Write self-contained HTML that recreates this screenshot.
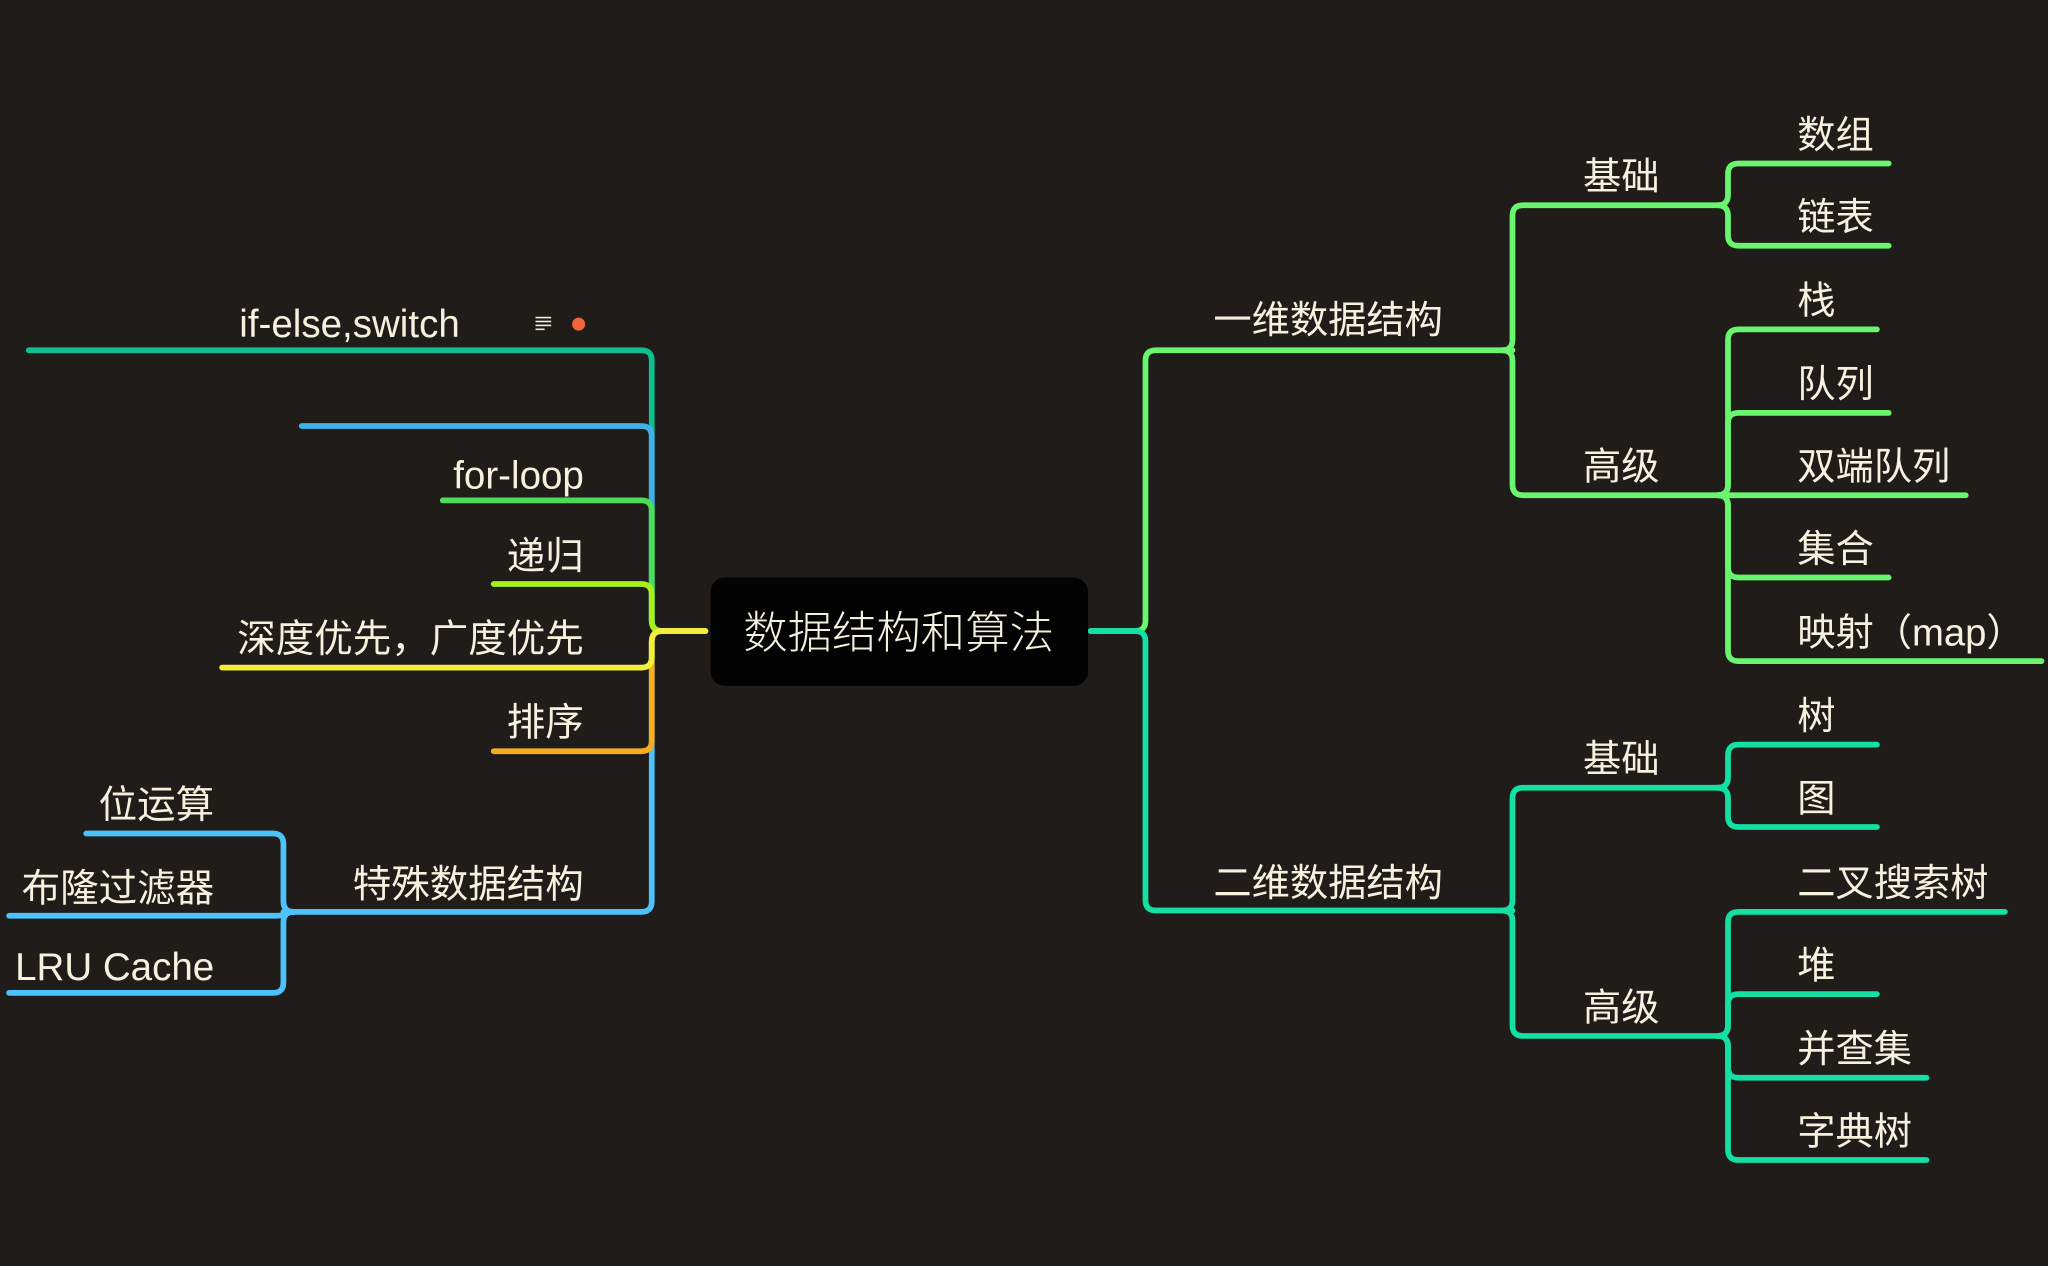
<!DOCTYPE html>
<html><head><meta charset="utf-8"><style>
html,body{margin:0;padding:0;background:#1f1c1a;}
svg{display:block}
text{font-family:"Liberation Sans","Noto Sans CJK SC",sans-serif;fill:#f4f1de;}
</style></head><body>
<svg width="2048" height="1266" viewBox="0 0 1568 969" xmlns="http://www.w3.org/2000/svg">
<rect width="1568" height="969" fill="#1f1c1a"/>
<g fill="none" stroke-width="4.4" stroke-linecap="round" stroke-linejoin="round">
<g stroke="#6af56f">
<path d="M835 483 H869 Q877 483 877 475 V276 Q877 268 885 268 H1158"/>
<path d="M1150 268 Q1158 268 1158 260 V165 Q1158 157 1166 157 H1320"/>
<path d="M1150 268 Q1158 268 1158 276 V371 Q1158 379 1166 379 H1320"/>
<path d="M1315 157 Q1323 157 1323 149 V133 Q1323 125 1331 125 H1446"/>
<path d="M1315 157 Q1323 157 1323 165 V180 Q1323 188 1331 188 H1446"/>
<path d="M1315 379 Q1323 379 1323 371 V260 Q1323 252 1331 252 H1437"/>
<path d="M1315 379 Q1323 379 1323 371 V324 Q1323 316 1331 316 H1446"/>
<path d="M1315 379 H1505"/>
<path d="M1315 379 Q1323 379 1323 387 V434 Q1323 442 1331 442 H1446"/>
<path d="M1315 379 Q1323 379 1323 387 V498 Q1323 506 1331 506 H1563"/>
</g>
<g stroke="#14e0a4">
<path d="M835 483 H869 Q877 483 877 491 V689 Q877 697 885 697 H1158"/>
<path d="M1150 697 Q1158 697 1158 689 V611 Q1158 603 1166 603 H1320"/>
<path d="M1150 697 Q1158 697 1158 705 V785 Q1158 793 1166 793 H1320"/>
<path d="M1315 603 Q1323 603 1323 595 V578 Q1323 570 1331 570 H1437"/>
<path d="M1315 603 Q1323 603 1323 611 V625 Q1323 633 1331 633 H1437"/>
<path d="M1315 793 Q1323 793 1323 785 V706 Q1323 698 1331 698 H1535"/>
<path d="M1315 793 Q1323 793 1323 785 V769 Q1323 761 1331 761 H1437"/>
<path d="M1315 793 Q1323 793 1323 801 V817 Q1323 825 1331 825 H1475"/>
<path d="M1315 793 Q1323 793 1323 801 V880 Q1323 888 1331 888 H1475"/>
</g>
<path stroke="#4cc3fa" d="M540 483 H507 Q499 483 499 491 V690 Q499 698 491 698 H217"/>
<path stroke="#4cc3fa" d="M225 698 Q217 698 217 690 V646 Q217 638 209 638 H66"/>
<path stroke="#4cc3fa" d="M225 698 Q217 698 217 700 Q217 701 209 701 H7"/>
<path stroke="#4cc3fa" d="M225 698 Q217 698 217 706 V752 Q217 760 209 760 H7"/>
<path stroke="#f6ac1e" d="M540 483 H507 Q499 483 499 491 V567 Q499 575 491 575 H378"/>
<path stroke="#0fc08e" d="M540 483 H507 Q499 483 499 475 V276 Q499 268 491 268 H22"/>
<path stroke="#3fb0e8" d="M540 483 H507 Q499 483 499 475 V334 Q499 326 491 326 H231"/>
<path stroke="#4ddc58" d="M540 483 H507 Q499 483 499 475 V391 Q499 383 491 383 H339"/>
<path stroke="#a6ee1c" d="M540 483 H507 Q499 483 499 475 V455 Q499 447 491 447 H378"/>
<path stroke="#f2ee3c" d="M540 483 H507 Q499 483 499 491 V503 Q499 511 491 511 H170"/>
<path stroke="#f2ee3c" d="M540 483 H505"/>
</g>
<rect x="544" y="442" width="289" height="83" rx="11" fill="#030303"/>
<text x="688" y="496" font-size="34" font-weight="300" text-anchor="middle">数据结构和算法</text>
<g font-size="29.3">
<text x="929" y="255">一维数据结构</text>
<text x="929" y="686">二维数据结构</text>
<text x="1212" y="145">基础</text>
<text x="1212" y="367">高级</text>
<text x="1212" y="591">基础</text>
<text x="1212" y="781">高级</text>
<text x="1376" y="113">数组</text>
<text x="1376" y="176">链表</text>
<text x="1376" y="240">栈</text>
<text x="1376" y="304">队列</text>
<text x="1376" y="367">双端队列</text>
<text x="1376" y="430">集合</text>
<text x="1376" y="494">映射（map）</text>
<text x="1376" y="558">树</text>
<text x="1376" y="621">图</text>
<text x="1376" y="686">二叉搜索树</text>
<text x="1376" y="749">堆</text>
<text x="1376" y="813">并查集</text>
<text x="1376" y="876">字典树</text>
</g>
<g font-size="29.5" text-anchor="end">
<text x="352" y="258">if-else,switch</text>
<text x="447" y="374">for-loop</text>
<text x="447" y="436">递归</text>
<text x="447" y="499">深度优先，广度优先</text>
<text x="447" y="563">排序</text>
<text x="447" y="687">特殊数据结构</text>
<text x="164" y="626">位运算</text>
<text x="164" y="690">布隆过滤器</text>
<text x="164" y="750">LRU Cache</text>
</g>
<g stroke="#f4f1de" stroke-width="1.2">
<line x1="410" y1="243" x2="422" y2="243"/><line x1="410" y1="246" x2="422" y2="246"/>
<line x1="410" y1="249" x2="422" y2="249"/><line x1="410" y1="252" x2="417" y2="252"/>
</g>
<circle cx="443" cy="248" r="5" fill="#f0653a"/>
</svg>
</body></html>
